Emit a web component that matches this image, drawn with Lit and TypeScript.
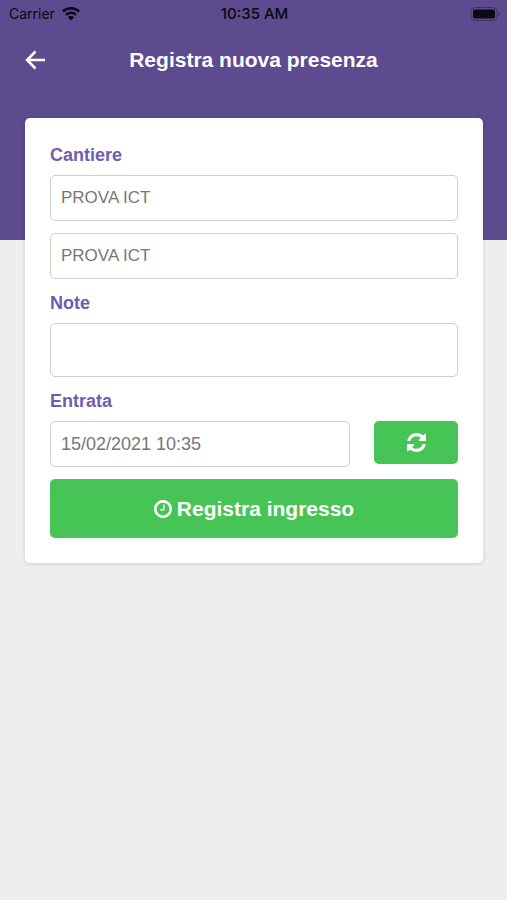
import { LitElement, html, css } from "lit";
import { customElement, state } from "lit/decorators.js";

@customElement("app-root")
export class AppRoot extends LitElement {
  static styles = css`
    :host {
      display: block;
      min-height: 100vh;
      background: linear-gradient(#5d4b8f, #5d4b8f) top / 100% 240px no-repeat #eeeeee;
      font-family: "Liberation Sans", Arial, sans-serif;
    }
    * {
      box-sizing: border-box;
    }
    svg {
      display: block;
      fill: currentColor;
    }
    .status {
      display: grid;
      grid-template-columns: 1fr auto 1fr;
      align-items: center;
      height: 28px;
      padding: 0 7px 0 9px;
      color: #0b0911;
      font: 400 14px/20px Inter, sans-serif;
    }
    .carrier {
      display: flex;
      align-items: center;
      gap: 7px;
    }
    .time {
      font-size: 15px;
      font-weight: 500;
    }
    .battery {
      justify-self: end;
    }
    .bar {
      display: grid;
      grid-template-columns: 1fr auto 1fr;
      align-items: center;
      height: 64px;
      padding: 0 25px;
      color: #fff;
    }
    .back {
      justify-self: start;
      padding: 0;
      border: 0;
      background: none;
      color: inherit;
    }
    h1 {
      margin: 0;
      font-size: 21px;
      line-height: 28px;
    }
    .card {
      display: flex;
      flex-direction: column;
      gap: 12px;
      margin: 26px 24px 0 25px;
      padding: 25px;
      border-radius: 5px;
      background: #fff;
      box-shadow: 0 1px 4px rgba(0, 0, 0, 0.14);
    }
    .field {
      display: flex;
      flex-direction: column;
      gap: 8px;
    }
    label {
      color: #705cae;
      font-size: 18px;
      font-weight: 700;
      line-height: 24px;
    }
    input,
    textarea {
      display: block;
      width: 100%;
      height: 46px;
      margin: 0;
      padding: 0 10px;
      border: 1px solid #cfcfcf;
      border-radius: 5px;
      background: #fff;
      color: #777;
      font: 400 18px/24px "Liberation Sans", Arial, sans-serif;
      outline: none;
    }
    .place {
      font-size: 17px;
    }
    textarea {
      height: 54px;
      padding: 10px;
      resize: none;
    }
    .row {
      display: grid;
      grid-template-columns: 1fr 84px;
      align-items: start;
      gap: 24px;
    }
    .action {
      display: flex;
      align-items: center;
      justify-content: center;
      gap: 5px;
      width: 100%;
      height: 59px;
      padding: 0;
      border: 0;
      border-radius: 5px;
      background: #46c456;
      color: #fff;
      font: 700 21px/28px "Liberation Sans", Arial, sans-serif;
    }
    .refresh {
      height: 43px;
    }
  `;

  @state() private entry = "15/02/2021 10:35";

  render() {
    return html`
      <div class="status">
        <span class="carrier">
          Carrier
          <svg width="18" height="14" viewBox="0 0 18 14" aria-hidden="true">
            <path d="M9 0C5.500 0 2.300 1.300 0 3.600L1.800 5.400A10.300 10.300 0 0 1 16.200 5.400L18 3.600A12.800 12.800 0 0 0 9 0Z" />
            <path d="M9 4.600C6.700 4.600 4.600 5.500 3 7L4.800 8.800A6.100 6.100 0 0 1 13.200 8.800L15 7A8.700 8.700 0 0 0 9 4.600Z" />
            <path d="M9 9C7.800 9 6.700 9.500 5.900 10.200L9 13.400L12.100 10.200A4.500 4.500 0 0 0 9 9Z" />
          </svg>
        </span>
        <span class="time">10:35 AM</span>
        <svg class="battery" width="30" height="14" viewBox="0 0 30 14" aria-hidden="true">
          <rect x="1" y="0.500" width="26" height="13" rx="4" fill="none" stroke="currentColor" opacity="0.35" />
          <rect x="3" y="2.500" width="22" height="9" rx="2" />
          <path d="M28.300 5v4q1.500-.6 1.500-2t-1.500-2z" opacity="0.4" />
        </svg>
      </div>
      <header class="bar">
        <button class="back" aria-label="Indietro">
          <svg width="21" height="20" viewBox="0 0 21 20" aria-hidden="true">
            <path d="M10.500 1.500L2 10L10.500 18.500M2 10H20" fill="none" stroke="currentColor" stroke-width="2.500" />
          </svg>
        </button>
        <h1>Registra nuova presenza</h1>
      </header>
      <form class="card" @submit=${(e: Event) => e.preventDefault()}>
        <div class="field">
          <label for="site">Cantiere</label>
          <input id="site" class="place" value="PROVA ICT" />
        </div>
        <input class="place" aria-label="Dettaglio cantiere" value="PROVA ICT" />
        <div class="field">
          <label for="notes">Note</label>
          <textarea id="notes"></textarea>
        </div>
        <div class="field">
          <label for="entry">Entrata</label>
          <div class="row">
            <input id="entry" .value=${this.entry} />
            <button type="button" class="action refresh" aria-label="Aggiorna">
              <svg width="19" height="19" viewBox="128 128 1536 1536" aria-hidden="true">
                <path d="M1639 1056q0 5-1 7-64 268-268 434.500t-478 166.500q-146 0-282.500-55t-243.500-157l-129 129q-19 19-45 19t-45-19-19-45v-448q0-26 19-45t45-19h448q26 0 45 19t19 45-19 45l-137 137q71 66 161 102t187 36q134 0 250-65t186-179q11-17 53-117 8-23 30-23h192q13 0 22.500 9.500t9.500 22.500zm25-800v448q0 26-19 45t-45 19h-448q-26 0-45-19t-19-45 19-45l138-138q-148-137-349-137-134 0-250 65t-186 179q-11 17-53 117-8 23-30 23h-199q-13 0-22.500-9.500t-9.500-22.500v-7q65-268 270-434.500t480-166.500q146 0 284 55.500t245 156.500l130-129q19-19 45-19t45 19 19 45z" />
              </svg>
            </button>
          </div>
        </div>
        <button class="action">
          <svg width="18" height="18" viewBox="128 128 1536 1536" aria-hidden="true">
            <path d="M1024 544v448q0 14-9 23t-23 9h-320q-14 0-23-9t-9-23v-64q0-14 9-23t23-9h224v-352q0-14 9-23t23-9h64q14 0 23 9t9 23zm416 352q0-148-73-273t-198-198-273-73-273 73-198 198-73 273 73 273 198 198 273 73 273-73 198-198 73-273zm224 0q0 209-103 385.500t-279.500 279.500-385.500 103-385.500-103-279.500-279.500-103-385.500 103-385.500 279.500-279.500 385.500-103 385.500 103 279.500 279.500 103 385.500z" />
          </svg>
          Registra ingresso
        </button>
      </form>
    `;
  }
}
